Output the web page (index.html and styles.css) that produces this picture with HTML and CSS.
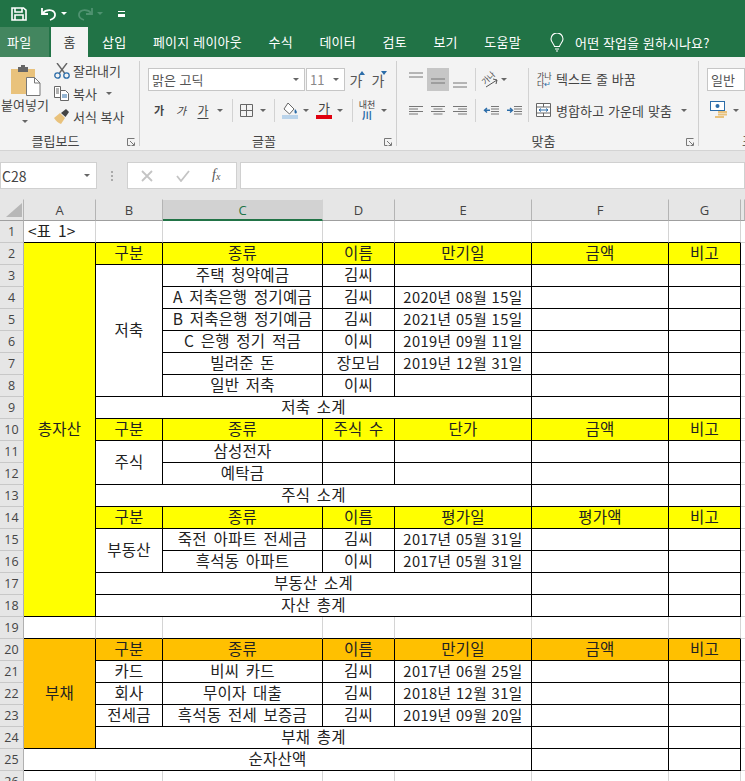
FILE: index.html
```html
<!DOCTYPE html>
<html lang="ko">
<head>
    <meta charset="UTF-8">
    <meta name="viewport" content="width=device-width, initial-scale=1.0">
    <title>Excel</title>
    <link rel="stylesheet" href="styles.css">
</head>
<body>

<div class="app">
    <div class="titlebar">
        <svg class="qa qa-save" width="16" height="14" viewBox="0 0 16 14"><path d="M1 1h11.5L15 3.2V13H1z M4 1v4h7V1 M4 13V8h8v5" fill="none" stroke="#fff" stroke-width="1.6"/></svg>
        <svg class="qa qa-undo" width="16" height="14" viewBox="0 0 16 14"><path d="M2 6c3-4 11-4 12 1 .5 3-2 5-5 6" fill="none" stroke="#fff" stroke-width="1.8"/><path d="M1 1v6h6" fill="none" stroke="#fff" stroke-width="1.8"/></svg>
        <span class="qa-caret"></span>
        <svg class="qa qa-redo" width="16" height="14" viewBox="0 0 16 14"><path d="M14 6C11 2 3 2 2 7c-.5 3 2 5 5 6" fill="none" stroke="#4f9270" stroke-width="1.8"/><path d="M15 1v6H9" fill="none" stroke="#4f9270" stroke-width="1.8"/></svg>
        <span class="qa-caret dim"></span>
        <span class="qa-custom"></span>
    </div>

    <div class="tabs">
        <span class="tab tab-file">파일</span>
        <span class="tab tab-home">홈</span>
        <span class="tab">삽입</span>
        <span class="tab">페이지 레이아웃</span>
        <span class="tab">수식</span>
        <span class="tab">데이터</span>
        <span class="tab">검토</span>
        <span class="tab">보기</span>
        <span class="tab">도움말</span>
        <svg class="bulb" width="14" height="19" viewBox="0 0 14 19"><path d="M4.5 13.5C4 10.5 1 9.5 1 6a6 6 0 0 1 12 0c0 3.500-3 4.500-3.500 7.500z M5 16h4 M6 18h2" fill="none" stroke="#fff" stroke-width="1.1"/></svg>
        <span class="tell">어떤 작업을 원하시나요?</span>
    </div>

    <div class="ribbon">
        <div class="group group-clip">
            <div class="clip-body">
                <div class="paste">
                    <svg width="30" height="31" viewBox="0 0 30 31"><rect x="0" y="4" width="24" height="25" fill="#e9c27c"/><rect x="7" y="2" width="10" height="5" fill="#666"/><rect x="10" y="0" width="4" height="3" fill="#666"/><path d="M15.500 12.500h8l5.500 5.500v12.500H15.500z" fill="#fff" stroke="#777"/><path d="M23.500 12.500V18H29" fill="none" stroke="#777"/></svg>
                    <span class="paste-label">붙여넣기</span>
                    <span class="caret"></span>
                </div>
                <div class="clip-list">
                    <div class="clip-row">
                        <svg width="16" height="16" viewBox="0 0 16 16"><path d="M3 0l7.500 10 M13 0L5.500 10" stroke="#666" stroke-width="1.400" fill="none"/><circle cx="3.500" cy="12.500" r="2.700" fill="none" stroke="#2b6ca8" stroke-width="1.300"/><circle cx="12.500" cy="12.500" r="2.700" fill="none" stroke="#2b6ca8" stroke-width="1.300"/></svg>
                        <span>잘라내기</span>
                    </div>
                    <div class="clip-row">
                        <svg width="16" height="15" viewBox="0 0 16 15"><path d="M.5.500h6v11h-6z M2 3h3 M2 5h3 M2 7h3" fill="#fff" stroke="#666"/><path d="M6.500 4.500h5l3 3v7h-8z" fill="#fff" stroke="#666"/><path d="M8 9h5 M8 11h5" stroke="#2b6ca8"/></svg>
                        <span>복사</span>
                        <span class="caret caret-copy"></span>
                    </div>
                    <div class="clip-row">
                        <svg width="16" height="15" viewBox="0 0 16 15"><path d="M0 9l6-5 5 5-4 6c-3-1-5-3-7-6z" fill="#e9c27c"/><path d="M7 4l5-4 3 3-3.500 5z" fill="#444"/></svg>
                        <span>서식 복사</span>
                    </div>
                </div>
            </div>
            <div class="group-label label-clip">클립보드</div>
            <svg class="launcher" width="8" height="8" viewBox="0 0 8 8"><path d="M.5 7.500v-7h7 M.5 7.500h3 M3 3l4 4 M4.500 7.500h3v-3" fill="none" stroke="#777"/></svg>
        </div>

        <div class="group group-font">
            <div class="tool-row row-top">
                <div class="select select-font">
                    <span>맑은 고딕</span>
                    <span class="caret"></span>
                </div>
                <div class="select select-size">
                    <span>11</span>
                    <span class="caret"></span>
                </div>
                <div class="tool tool-grow">가<i class="up"></i></div>
                <div class="tool tool-grow">가<i class="down"></i></div>
            </div>
            <div class="tool-row">
                <div class="tool ga-bold">가</div>
                <div class="tool ga-italic">가</div>
                <div class="tool ga-under">가</div>
                <span class="caret wide"></span>
                <span class="sep sep-a"></span>
                <div class="tool">
                    <svg width="13" height="13" viewBox="0 0 13 13"><path d="M.5.500h12v12H.5z M6.500.500v12 M.5 6.500h12" fill="none" stroke="#666"/></svg>
                </div>
                <span class="caret wide"></span>
                <span class="sep sep-b"></span>
                <div class="tool tool-fill">
                    <svg width="16" height="17" viewBox="0 0 16 17"><path d="M6 1l6 6-4.500 5L2 7z" fill="#fff" stroke="#666"/><path d="M13 7c2 2 2.500 4 1 4.500s-2-2-1-4.500z" fill="#2b6ca8"/><rect x="0" y="13" width="16" height="4" fill="#b9d3ea"/></svg>
                </div>
                <span class="caret wide"></span>
                <div class="tool tool-color">
                    <span class="color-ga">가</span>
                    <span class="color-bar"></span>
                </div>
                <span class="caret wide"></span>
                <span class="sep sep-c"></span>
                <div class="tool tool-phon">
                    <span class="phon-top">내천</span>
                    <span class="phon-bot">川</span>
                </div>
                <span class="caret wide"></span>
            </div>
            <div class="group-label">글꼴</div>
            <svg class="launcher" width="8" height="8" viewBox="0 0 8 8"><path d="M.5 7.500v-7h7 M.5 7.500h3 M3 3l4 4 M4.500 7.500h3v-3" fill="none" stroke="#777"/></svg>
        </div>

        <div class="group group-align">
            <div class="tool-row row-top">
                <div class="align-btn at-top"><svg width="14" height="7" viewBox="0 0 14 7"><path d="M0 1h14 M0 5h14" stroke="#777"/></svg></div>
                <div class="align-btn active"><svg width="14" height="7" viewBox="0 0 14 7"><path d="M0 1h14 M0 5h14" stroke="#777"/></svg></div>
                <div class="align-btn at-bottom"><svg width="14" height="7" viewBox="0 0 14 7"><path d="M0 1h14 M0 5h14" stroke="#777"/></svg></div>
                <span class="sep sep-d"></span>
                <div class="orient"><span>가나</span><svg width="12" height="10" viewBox="0 0 12 10"><path d="M0 9L11 2 M7 1l4 1-1 4" fill="none" stroke="#555"/></svg></div>
                <span class="caret wide"></span>
                <span class="sep sep-e"></span>
                <div class="wrap-icon"><span>가나</span><span>다<i>↵</i></span></div>
                <span class="action action-wrap">텍스트 줄 바꿈</span>
            </div>
            <div class="tool-row">
                <div class="align-btn"><svg width="14" height="9" viewBox="0 0 14 9"><path d="M0 .5h14 M0 3h9 M0 5.500h14 M0 8h9" stroke="#777"/></svg></div>
                <div class="align-btn"><svg width="14" height="9" viewBox="0 0 14 9"><path d="M0 .5h14 M2.500 3h9 M0 5.500h14 M2.500 8h9" stroke="#777"/></svg></div>
                <div class="align-btn"><svg width="14" height="9" viewBox="0 0 14 9"><path d="M0 .5h14 M5 3h9 M0 5.500h14 M5 8h9" stroke="#777"/></svg></div>
                <span class="sep sep-d"></span>
                <div class="indent"><svg width="16" height="9" viewBox="0 0 16 9"><path d="M8 .5h8 M8 3h8 M8 5.500h8 M8 8h8" stroke="#777"/><path d="M7 4.200H2 M4 2L1.500 4.200 4 6.500" fill="none" stroke="#2b6ca8" stroke-width="1.400"/></svg></div>
                <div class="indent"><svg width="16" height="9" viewBox="0 0 16 9"><path d="M8 .5h8 M8 3h8 M8 5.500h8 M8 8h8" stroke="#777"/><path d="M1 4.200h5 M4 2l2.500 2.200L4 6.500" fill="none" stroke="#2b6ca8" stroke-width="1.400"/></svg></div>
                <span class="sep sep-f"></span>
                <svg class="merge-icon" width="15" height="14" viewBox="0 0 15 14"><path d="M.5.500h14v13H.5z M.5 4h14 M.5 10h14 M7.500.500V4 M7.500 10v3.500" fill="#fff" stroke="#666"/><path d="M3 7h9 M5 5.500L3 7l2 1.500 M10 5.500L12 7l-2 1.500" fill="none" stroke="#2b6ca8"/></svg>
                <span class="action">병합하고 가운데 맞춤</span>
                <span class="caret caret-merge"></span>
            </div>
            <div class="group-label">맞춤</div>
            <svg class="launcher" width="8" height="8" viewBox="0 0 8 8"><path d="M.5 7.500v-7h7 M.5 7.500h3 M3 3l4 4 M4.500 7.500h3v-3" fill="none" stroke="#777"/></svg>
        </div>

        <div class="group group-number">
            <div class="tool-row row-top">
                <div class="select select-number"><span>일반</span></div>
            </div>
            <div class="tool-row">
                <svg class="money" width="18" height="18" viewBox="0 0 18 18"><rect x=".5" y=".5" width="14" height="9" fill="#fff" stroke="#2b6ca8"/><circle cx="7.500" cy="5" r="2" fill="#2b6ca8"/><path d="M8 11h9 M8 13.500h9 M5 16h9" stroke="#e9c27c" stroke-width="2"/></svg>
                <span class="caret caret-money"></span>
            </div>
            <div class="group-label">표</div>
        </div>
    </div>

    <div class="formula-strip">
        <div class="name-box">
            <span>C28</span>
            <span class="caret"></span>
        </div>
        <div class="grip"><i></i><i></i><i></i></div>
        <div class="fx-box">
            <svg width="12" height="12" viewBox="0 0 12 12"><path d="M1 1l10 10 M11 1L1 11" stroke="#c4c4c4" stroke-width="1.800"/></svg>
            <svg width="14" height="12" viewBox="0 0 14 12"><path d="M1 6l4 5 8-10" fill="none" stroke="#c4c4c4" stroke-width="1.800"/></svg>
            <span class="fx">f<sub>x</sub></span>
        </div>
        <div class="formula-input"></div>
    </div>

    <table class="sheet">
        <colgroup>
            <col class="c-head"><col class="c-a"><col class="c-b"><col class="c-c"><col class="c-d"><col class="c-e"><col class="c-f"><col class="c-g"><col class="c-h">
        </colgroup>
        <thead>
            <tr>
                <th class="corner"><svg width="16" height="14" viewBox="0 0 16 14"><path d="M16 0v14H0z" fill="#b7b7b7"/></svg></th>
                <th>A</th><th>B</th><th class="selected">C</th><th>D</th><th>E</th><th>F</th><th>G</th><th></th>
            </tr>
        </thead>
        <tbody>
            <tr class="plain">
                <th>1</th><td class="left">&lt;표 1&gt;</td><td></td><td></td><td></td><td></td><td></td><td></td><td class="h"></td>
            </tr>
            <tr>
                <th>2</th><td class="yellow" rowspan="17">총자산</td><td class="yellow">구분</td><td class="yellow">종류</td><td class="yellow">이름</td><td class="yellow">만기일</td><td class="yellow">금액</td><td class="yellow">비고</td><td class="h"></td>
            </tr>
            <tr>
                <th>3</th><td rowspan="6">저축</td><td>주택 청약예금</td><td>김씨</td><td></td><td></td><td></td><td class="h"></td>
            </tr>
            <tr>
                <th>4</th><td>A 저축은행 정기예금</td><td>김씨</td><td class="date">2020년 08월 15일</td><td></td><td></td><td class="h"></td>
            </tr>
            <tr>
                <th>5</th><td>B 저축은행 정기예금</td><td>김씨</td><td class="date">2021년 05월 15일</td><td></td><td></td><td class="h"></td>
            </tr>
            <tr>
                <th>6</th><td>C 은행 정기 적금</td><td>이씨</td><td class="date">2019년 09월 11일</td><td></td><td></td><td class="h"></td>
            </tr>
            <tr>
                <th>7</th><td>빌려준 돈</td><td>장모님</td><td class="date">2019년 12월 31일</td><td></td><td></td><td class="h"></td>
            </tr>
            <tr>
                <th>8</th><td>일반 저축</td><td>이씨</td><td></td><td></td><td></td><td class="h"></td>
            </tr>
            <tr>
                <th>9</th><td colspan="4">저축 소계</td><td></td><td></td><td class="h"></td>
            </tr>
            <tr>
                <th>10</th><td class="yellow">구분</td><td class="yellow">종류</td><td class="yellow">주식 수</td><td class="yellow">단가</td><td class="yellow">금액</td><td class="yellow">비고</td><td class="h"></td>
            </tr>
            <tr>
                <th>11</th><td rowspan="2">주식</td><td>삼성전자</td><td></td><td></td><td></td><td></td><td class="h"></td>
            </tr>
            <tr>
                <th>12</th><td>예탁금</td><td></td><td></td><td></td><td></td><td class="h"></td>
            </tr>
            <tr>
                <th>13</th><td colspan="4">주식 소계</td><td></td><td></td><td class="h"></td>
            </tr>
            <tr>
                <th>14</th><td class="yellow">구분</td><td class="yellow">종류</td><td class="yellow">이름</td><td class="yellow">평가일</td><td class="yellow">평가액</td><td class="yellow">비고</td><td class="h"></td>
            </tr>
            <tr>
                <th>15</th><td rowspan="2">부동산</td><td>죽전 아파트 전세금</td><td>김씨</td><td class="date">2017년 05월 31일</td><td></td><td></td><td class="h"></td>
            </tr>
            <tr>
                <th>16</th><td>흑석동 아파트</td><td>이씨</td><td class="date">2017년 05월 31일</td><td></td><td></td><td class="h"></td>
            </tr>
            <tr>
                <th>17</th><td colspan="4">부동산 소계</td><td></td><td></td><td class="h"></td>
            </tr>
            <tr>
                <th>18</th><td colspan="4">자산 총계</td><td></td><td></td><td class="h"></td>
            </tr>
            <tr class="plain">
                <th>19</th><td></td><td></td><td></td><td></td><td></td><td></td><td></td><td class="h"></td>
            </tr>
            <tr>
                <th>20</th><td class="orange" rowspan="5">부채</td><td class="orange">구분</td><td class="orange">종류</td><td class="orange">이름</td><td class="orange">만기일</td><td class="orange">금액</td><td class="orange">비고</td><td class="h"></td>
            </tr>
            <tr>
                <th>21</th><td>카드</td><td>비씨 카드</td><td>김씨</td><td class="date">2017년 06월 25일</td><td></td><td></td><td class="h"></td>
            </tr>
            <tr>
                <th>22</th><td>회사</td><td>무이자 대출</td><td>김씨</td><td class="date">2018년 12월 31일</td><td></td><td></td><td class="h"></td>
            </tr>
            <tr>
                <th>23</th><td>전세금</td><td>흑석동 전세 보증금</td><td>김씨</td><td class="date">2019년 09월 20일</td><td></td><td></td><td class="h"></td>
            </tr>
            <tr>
                <th>24</th><td colspan="4">부채 총계</td><td></td><td></td><td class="h"></td>
            </tr>
            <tr>
                <th>25</th><td colspan="5">순자산액</td><td></td><td></td><td class="h"></td>
            </tr>
            <tr class="plain last">
                <th>26</th><td></td><td></td><td></td><td></td><td></td><td></td><td></td><td class="h"></td>
            </tr>
        </tbody>
    </table>
</div>

</body>
</html>
```

FILE: styles.css
```css
body {
    font-family: 'Noto Sans CJK KR', 'Noto Sans', sans-serif;
    margin: 0;
    background-color: #fff;
    color: #333;
}
.app {
    width: 745px;
    height: 781px;
    overflow: hidden;
}
.titlebar {
    height: 27px;
    background-color: #217346;
    display: flex;
    align-items: center;
    padding-left: 11px;
    box-sizing: border-box;
}
.qa-undo {
    margin-left: 14px;
}
.qa-redo {
    margin-left: 10px;
}
.qa-caret {
    width: 0;
    height: 0;
    margin-left: 4px;
    border-left: 3px solid transparent;
    border-right: 3px solid transparent;
    border-top: 3px solid #fff;
}
.qa-caret.dim {
    border-top-color: #4f9270;
}
.qa-custom {
    width: 7px;
    height: 2px;
    margin-left: 15px;
    border-top: 1px solid #fff;
    border-bottom: 3px solid #fff;
}
.tabs {
    height: 30px;
    background-color: #217346;
    display: flex;
    align-items: center;
    color: #fff;
    font-size: 13px;
    letter-spacing: 0.2px;
}
.tab {
    padding: 0 13.3px;
    line-height: 30px;
    white-space: nowrap;
}
.tab-file {
    width: 49px;
    padding: 0 0 0 7px;
    box-sizing: border-box;
    background-color: #43865f;
    margin-right: 2px;
}
.tab-home {
    width: 37px;
    padding: 0;
    margin-right: 0.7px;
    text-align: center;
    background-color: #f3f3f3;
    color: #333;
}
.bulb {
    margin-left: 16px;
}
.tell {
    margin-left: 11px;
    letter-spacing: 0.1px;
    white-space: nowrap;
}
.ribbon {
    height: 94px;
    box-sizing: border-box;
    background-color: #f3f3f3;
    border-bottom: 1px solid #d4d4d4;
    padding-top: 4px;
    display: flex;
    font-size: 13px;
    color: #444;
}
.group {
    position: relative;
    height: 85px;
    box-sizing: border-box;
    border-right: 1px solid #cfcfcf;
    padding-top: 7px;
    display: flex;
    flex-direction: column;
    flex-shrink: 0;
}
.group-clip {
    width: 140px;
    padding-top: 0;
}
.group-font {
    width: 257px;
    padding-left: 8px;
}
.group-align {
    width: 302px;
    padding-left: 8px;
}
.group-number {
    width: 46px;
    border-right: none;
    padding-left: 8px;
}
.group-label {
    margin-top: auto;
    margin-bottom: -3px;
    line-height: 16px;
    text-align: center;
    padding-right: 16px;
    white-space: nowrap;
}
.label-clip {
    padding-right: 28px;
}
.group-number .group-label {
    text-align: left;
    padding: 0 0 0 35px;
}
.launcher {
    position: absolute;
    right: 4px;
    bottom: 0;
}
.caret {
    display: flex;
    align-items: center;
    justify-content: center;
    flex-shrink: 0;
}
.caret::before {
    content: "";
    width: 0;
    height: 0;
    border-left: 3px solid transparent;
    border-right: 3px solid transparent;
    border-top: 3px solid #666;
}
.caret.wide {
    width: 12px;
}
.clip-body {
    display: flex;
}
.paste {
    width: 50px;
    display: flex;
    flex-direction: column;
    align-items: center;
    padding-top: 4px;
}
.paste svg {
    margin-left: 2px;
}
.paste-label {
    font-size: 13px;
    line-height: 17px;
    white-space: nowrap;
}
.paste .caret {
    height: 14px;
    margin-top: 1px;
}
.clip-list {
    padding-left: 4px;
    margin-top: -2px;
}
.clip-row {
    height: 23px;
    display: flex;
    align-items: center;
    white-space: nowrap;
}
.clip-row svg {
    width: 16px;
    margin-right: 3px;
}
.caret-copy {
    margin-left: 9px;
}
.tool-row {
    display: flex;
    align-items: center;
    height: 24px;
    margin-top: 7px;
}
.row-top {
    height: 23px;
    margin-top: 0;
}
.select {
    height: 23px;
    box-sizing: border-box;
    background-color: #fff;
    border: 1px solid #c6c6c6;
    display: flex;
    align-items: center;
    justify-content: space-between;
    padding: 0 5px 0 3px;
    color: #555;
}
.select-font {
    width: 157px;
}
.select-size {
    width: 39px;
    margin-left: 1px;
    color: #888;
}
.select-number {
    width: 60px;
}
.tool {
    width: 22px;
    height: 24px;
    display: flex;
    align-items: center;
    justify-content: center;
    flex-shrink: 0;
}
.tool-grow {
    position: relative;
    font-size: 14px;
    color: #555;
}
.tool-grow .up,
.tool-grow .down {
    position: absolute;
    top: 3px;
    right: 2px;
    width: 0;
    height: 0;
    border-left: 3px solid transparent;
    border-right: 3px solid transparent;
}
.tool-grow .up {
    border-bottom: 4px solid #2b6ca8;
}
.tool-grow .down {
    border-top: 4px solid #2b6ca8;
}
.ga-bold {
    font-size: 11px;
    font-weight: 700;
}
.ga-italic {
    font-size: 11px;
    font-style: italic;
}
.ga-under {
    font-size: 12px;
    text-decoration: underline;
    text-underline-offset: 2px;
}
.sep {
    width: 1px;
    height: 23px;
    background-color: #d2d2d2;
    flex-shrink: 0;
}
.sep-a {
    margin: 0 2px 0 6px;
}
.sep-b {
    margin: 0 5px 0 5px;
}
.sep-c {
    margin: 0 3px 0 6px;
}
.tool-fill,
.tool-color {
    width: 20px;
}
.tool-color {
    margin-left: 2px;
    flex-direction: column;
}
.color-ga {
    font-size: 13px;
    line-height: 14px;
}
.color-bar {
    width: 16px;
    height: 4px;
    background-color: #e0000f;
}
.tool-phon {
    flex-direction: column;
}
.phon-top {
    font-size: 9px;
    line-height: 10px;
}
.phon-bot {
    font-size: 10px;
    line-height: 10px;
    font-weight: 700;
    color: #2b6ca8;
}
.align-btn {
    width: 22px;
    height: 23px;
    display: flex;
    align-items: center;
    justify-content: center;
    flex-shrink: 0;
}
.active {
    background-color: #c6c6c6;
    padding-top: 3px;
    box-sizing: border-box;
}
.at-top {
    padding-bottom: 8px;
    box-sizing: border-box;
}
.at-bottom {
    padding-top: 12px;
    box-sizing: border-box;
}
.sep-d {
    margin: 0 7px 0 4px;
}
.orient {
    width: 15px;
    height: 16px;
    position: relative;
    flex-shrink: 0;
}
.orient span {
    position: absolute;
    left: -2px;
    top: 1px;
    font-size: 8px;
    line-height: 10px;
    transform: rotate(-45deg);
}
.orient svg {
    position: absolute;
    right: 0;
    bottom: 0;
}
.sep-e {
    margin: 0 8px 0 18px;
    height: 32px;
    align-self: flex-start;
}
.sep-f {
    margin: 0 7px 0 -1px;
}
.wrap-icon {
    width: 19px;
    display: flex;
    flex-direction: column;
    font-size: 8px;
    line-height: 8px;
    flex-shrink: 0;
}
.wrap-icon i {
    font-style: normal;
    color: #2b6ca8;
}
.action {
    white-space: nowrap;
    letter-spacing: 0.1px;
}
.action-wrap {
    margin-bottom: 3px;
}
.indent {
    width: 16px;
    margin-right: 7px;
    display: flex;
    flex-shrink: 0;
}
.merge-icon {
    margin-right: 5px;
    flex-shrink: 0;
}
.caret-merge {
    margin-left: 9px;
}
.money {
    margin-left: 3px;
}
.caret-money {
    margin-left: 5px;
}
.formula-strip {
    height: 48px;
    box-sizing: border-box;
    background-color: #e6e6e6;
    padding-top: 11px;
    display: flex;
    align-items: flex-start;
}
.name-box,
.fx-box,
.formula-input {
    height: 27px;
    box-sizing: border-box;
    background-color: #fff;
    border: 1px solid #d0d0d0;
}
.name-box {
    width: 97px;
    display: flex;
    align-items: center;
    justify-content: space-between;
    padding: 0 6px 0 1px;
    font-size: 14px;
    color: #444;
}
.grip {
    width: 30px;
    height: 27px;
    display: flex;
    flex-direction: column;
    align-items: center;
    justify-content: center;
    gap: 2px;
}
.grip i {
    width: 2px;
    height: 2px;
    background-color: #aaa;
}
.fx-box {
    width: 110px;
    display: flex;
    align-items: center;
    padding-left: 13px;
    gap: 23px;
}
.fx {
    font-family: 'Liberation Serif', serif;
    font-style: italic;
    font-size: 14px;
    line-height: 14px;
    color: #555;
    margin-left: -1px;
}
.fx sub {
    font-size: 10px;
    vertical-align: -1px;
}
.formula-input {
    flex: 1;
    margin-left: 3px;
}
.sheet {
    table-layout: fixed;
    width: 745px;
    border-collapse: separate;
    border-spacing: 0;
    font-size: 15.5px;
    letter-spacing: 0.25px;
    word-spacing: 2px;
    color: #222;
}
.c-head {
    width: 24px;
}
.c-a {
    width: 72px;
}
.c-b {
    width: 67px;
}
.c-c {
    width: 160px;
}
.c-d {
    width: 72px;
}
.c-e,
.c-f {
    width: 137px;
}
.c-g {
    width: 72px;
}
.c-h {
    width: 4px;
}
th {
    height: 22px;
    box-sizing: border-box;
    padding: 0;
    background-color: #e6e6e6;
    font-weight: 400;
    font-size: 13px;
    line-height: 18px;
    letter-spacing: 0;
    color: #444;
    border-right: 1px solid #c4c4c4;
    border-bottom: 1px solid #c8c8c8;
}
thead th {
    border-top: 1px solid #e6e6e6;
    border-right-color: #b4b4b4;
    border-bottom-color: #9f9f9f;
    font-family: 'Open Sans', sans-serif;
}
tbody th {
    border-right-color: #b0b0b0;
    font-family: 'Open Sans', sans-serif;
    font-size: 12.5px;
}
.corner {
    text-align: right;
    padding-right: 1px;
    line-height: 0;
}
.selected {
    background-color: #d2d2d2;
    color: #217346;
    border-bottom: 2px solid #217346;
    border-right-color: #d2d2d2;
}
td {
    height: 22px;
    box-sizing: border-box;
    padding: 0 0 2px;
    line-height: 19px;
    text-align: center;
    white-space: nowrap;
    border-right: 1px solid #000;
    border-bottom: 1px solid #000;
}
.plain td {
    border-right-color: #d4d4d4;
}
.last td {
    border-bottom-color: #d4d4d4;
}
td.h {
    border-right: none;
    border-bottom-color: #d4d4d4;
}
td.left {
    text-align: left;
    padding-left: 4px;
}
td.date {
    font-size: 14.67px;
    letter-spacing: 0.43px;
    word-spacing: 0;
}
.yellow {
    background-color: #ffff00;
}
.orange {
    background-color: #ffc000;
}
```
